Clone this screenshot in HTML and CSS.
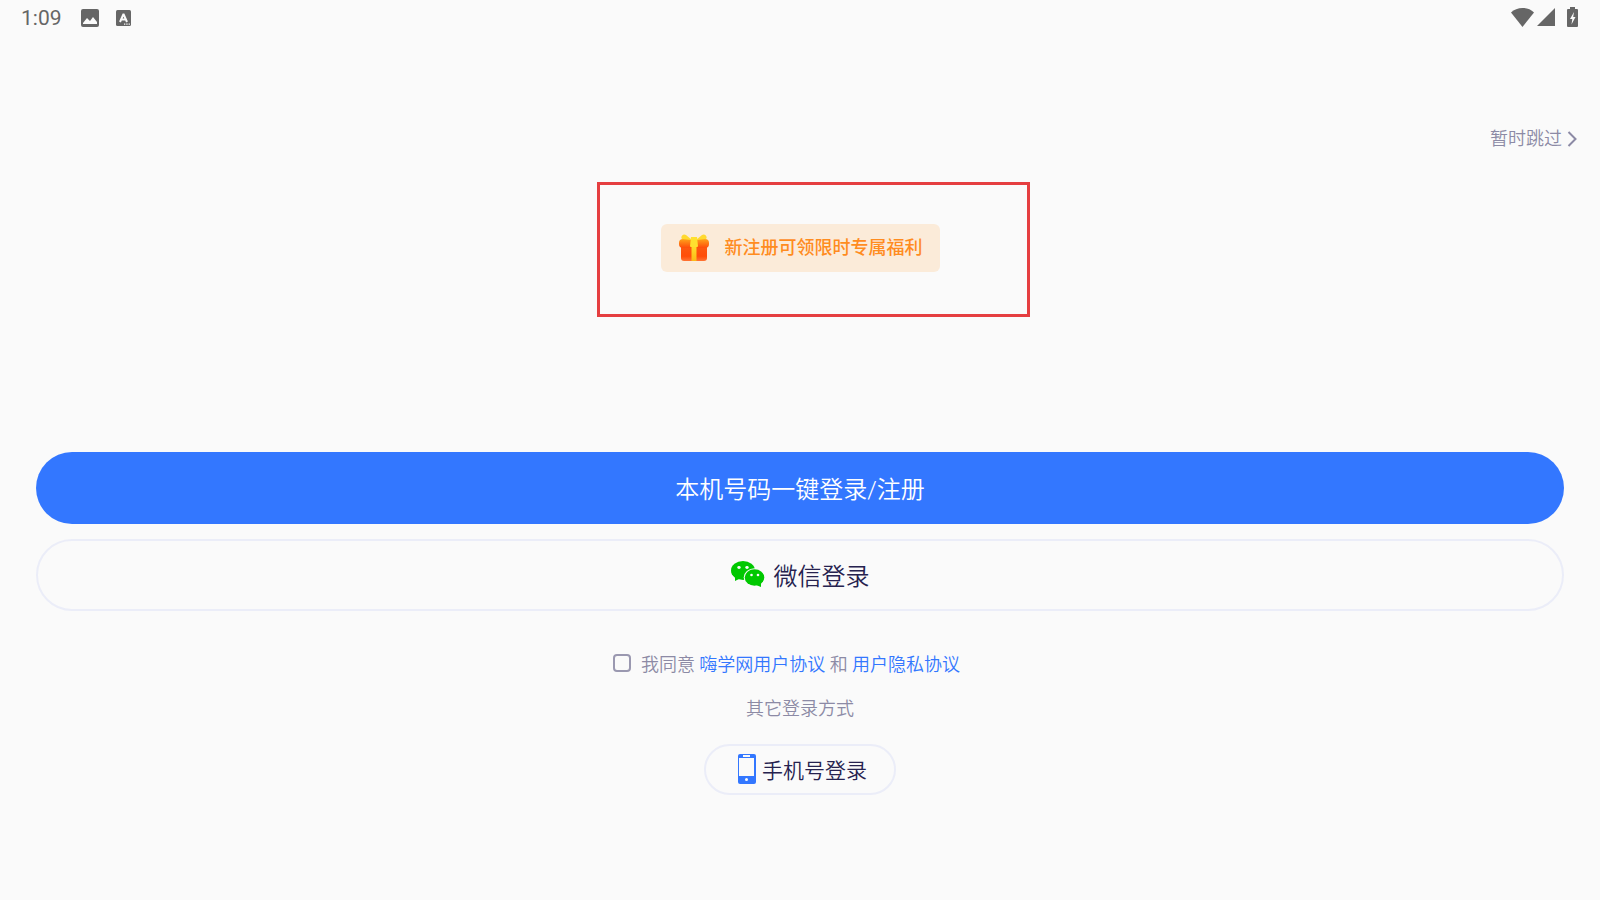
FILE: index.html
```html
<!DOCTYPE html>
<html lang="zh-CN">
<head>
    <meta charset="UTF-8">
    <meta name="viewport" content="width=device-width, initial-scale=1.0">
    <title>登录</title>
    <link rel="stylesheet" href="styles.css">
</head>
<body>
    <header class="status-bar">
        <div class="status-left">
            <span class="clock">1:09</span>
            <svg class="status-image" width="18" height="18" viewBox="0 0 18 18">
                <path fill="#666" fill-rule="evenodd" d="M2 0h14a2 2 0 0 1 2 2v14a2 2 0 0 1-2 2H2a2 2 0 0 1-2-2V2a2 2 0 0 1 2-2zM2 15h14v-2l-4-5-3 4-3-3-4 5z"/>
            </svg>
            <svg class="status-app" width="15" height="16" viewBox="0 0 15 16">
                <rect width="15" height="16" rx="1.5" fill="#666"/>
                <path fill="none" stroke="#fafafa" stroke-width="2" d="M4 12L7.3 4.500h.4L11 12M5 9.500h5"/>
                <path fill="#fafafa" d="M8 13.500h1.300v1.300H8zM10.300 13.500h1.300v1.300h-1.300zM12.600 13.500h1.300v1.300h-1.300z"/>
            </svg>
        </div>
        <div class="status-right">
            <svg width="23" height="19" viewBox="0 0 23 19">
                <path fill="#666" d="M11.500 19L0 4.500C3 1.500 7 0 11.500 0S20 1.500 23 4.500z"/>
            </svg>
            <svg width="18" height="18" viewBox="0 0 18 18">
                <path fill="#666" d="M18 0v18H0z"/>
            </svg>
            <svg class="battery" width="11" height="20" viewBox="0 0 11 20">
                <path fill="#666" d="M3 0h5v2h2a1 1 0 0 1 1 1v16a1 1 0 0 1-1 1H1a1 1 0 0 1-1-1V3a1 1 0 0 1 1-1h2z"/>
                <path fill="#fafafa" d="M7 5L3 12h2.300L4.500 17.500 8.500 10H6.200z"/>
            </svg>
        </div>
    </header>

    <nav class="top-nav">
        <a class="skip" href="#">暂时跳过
            <svg width="10" height="16" viewBox="0 0 10 16">
                <path fill="none" stroke="#8c8aa5" stroke-width="2" d="M1.500 1l7 7-7 7"/>
            </svg>
        </a>
    </nav>

    <main class="login">
        <div class="promo">
            <svg width="32" height="28" viewBox="0 0 32 28">
                <defs>
                    <linearGradient id="box" x1="0" y1="0" x2="0" y2="1">
                        <stop offset="0" stop-color="#fb5b12"/>
                        <stop offset=".7" stop-color="#ff4d08"/>
                        <stop offset="1" stop-color="#ff7433"/>
                    </linearGradient>
                    <linearGradient id="lid" x1="0" y1="0" x2="0" y2="1">
                        <stop offset="0" stop-color="#ffa31a"/>
                        <stop offset="1" stop-color="#ff4b0b"/>
                    </linearGradient>
                    <linearGradient id="ribbon" x1="0" y1="0" x2="0" y2="1">
                        <stop offset="0" stop-color="#ffe22e"/>
                        <stop offset="1" stop-color="#fcb917"/>
                    </linearGradient>
                </defs>
                <path fill="url(#box)" d="M3 11h26v13a3 3 0 0 1-3 3H6a3 3 0 0 1-3-3z"/>
                <rect x="1" y="5" width="30" height="9" rx="4" fill="url(#lid)"/>
                <path fill="#ffd92f" d="M14 6L8 1C5-1 2 3 4 5l9 1zM18 6l6-5c3-2 6 2 4 4l-9 1z"/>
                <path fill="url(#ribbon)" d="M13.500 10h5v17h-5z"/>
                <path fill="#ffe02f" d="M13 3h6l1 9a1 1 0 0 1-1 1h-6a1 1 0 0 1-1-1z"/>
            </svg>
            <span>新注册可领限时专属福利</span>
            <div class="highlight"></div>
        </div>

        <button class="btn btn-primary" type="button">本机号码一键登录/注册</button>
        <button class="btn btn-wechat" type="button">
            <svg width="34" height="26" viewBox="0 0 34 26">
                <ellipse cx="12" cy="9.500" rx="12" ry="9.500" fill="#00c800"/>
                <path fill="#00c800" d="M4 15v5l6-3z"/>
                <ellipse cx="23.500" cy="16.500" rx="10.800" ry="9.300" fill="#fafafa"/>
                <ellipse cx="23.500" cy="16.500" rx="9.800" ry="8.300" fill="#00c800"/>
                <path fill="#00c800" d="M25 24l5 2v-5z"/>
                <g fill="#fafafa">
                    <ellipse cx="8" cy="6.500" rx="1.700" ry="1.400"/>
                    <ellipse cx="16" cy="6.500" rx="1.700" ry="1.400"/>
                    <circle cx="20.500" cy="14" r="1.300"/>
                    <circle cx="27" cy="14" r="1.300"/>
                </g>
            </svg>
            微信登录
        </button>

        <div class="agreement">
            <input type="checkbox" id="agree">
            <p><label for="agree">我同意</label> <a href="#">嗨学网用户协议</a> 和 <a href="#">用户隐私协议</a></p>
        </div>

        <p class="other">其它登录方式</p>
        <button class="btn-phone" type="button">
            <svg width="18" height="30" viewBox="0 0 18 30">
                <rect width="18" height="30" rx="2" fill="#3377ff"/>
                <path fill="#fafafa" d="M1 4h15v18H1zM5 1h7v2H5z"/>
                <circle cx="8.500" cy="25.500" r="1.500" fill="#fafafa"/>
            </svg>
            手机号登录
        </button>
    </main>
</body>
</html>
```
FILE: styles.css
```css
* {
    box-sizing: border-box;
}
body {
    margin: 0;
    background-color: #fafafa;
    color: #8c8aa5;
    font-family: Roboto, "Noto Sans CJK SC", sans-serif;
    font-size: 18px;
    font-weight: 350;
    line-height: 26px;
}
a {
    color: #3377ff;
    text-decoration: none;
}
p {
    margin: 0;
}
svg {
    display: block;
    flex-shrink: 0;
}
button {
    font-family: inherit;
    font-weight: inherit;
    cursor: pointer;
}
.status-bar {
    display: flex;
    justify-content: space-between;
    align-items: center;
    height: 36px;
    padding: 0 22px 0 21px;
}
.status-left, .status-right {
    display: flex;
    align-items: center;
}
.clock {
    color: #666;
    font-size: 21px;
    font-weight: 400;
}
.status-image {
    margin-left: 19px;
}
.status-app {
    margin-left: 17px;
}
.status-right {
    gap: 3px;
    padding-bottom: 2px;
}
.battery {
    margin-left: 9px;
}
.top-nav {
    display: flex;
    justify-content: flex-end;
    padding: 90px 23px 0;
}
.skip {
    display: flex;
    align-items: center;
    gap: 5px;
    color: #8c8aa5;
}
.login {
    display: flex;
    flex-direction: column;
    align-items: center;
    padding: 72px 36px 40px;
}
.promo {
    position: relative;
    display: flex;
    align-items: center;
    gap: 15px;
    height: 48px;
    margin-bottom: 180px;
    padding: 0 17px;
    border-radius: 6px;
    background-color: #fbebd9;
    color: #ff8c1f;
    font-weight: 500;
}
/* red frame around the promo tag */
.highlight {
    position: absolute;
    top: -42px;
    right: -90px;
    bottom: -45px;
    left: -64px;
    border: 3px solid #e53e40;
}
.btn {
    display: flex;
    justify-content: center;
    align-items: center;
    gap: 9px;
    width: 100%;
    height: 72px;
    padding: 0 0 2px;
    border: none;
    border-radius: 36px;
    font-size: 24px;
}
.btn-primary {
    background-color: #3377ff;
    color: #fff;
}
.btn-wechat {
    margin-top: 15px;
    border: 2px solid #ebedf8;
    background-color: transparent;
    color: #26224f;
}
.agreement {
    display: flex;
    align-items: center;
    gap: 10px;
    margin-top: 37px;
    padding-right: 27px;
}
.agreement p {
    padding-top: 4px;
}
.agreement input {
    appearance: none;
    width: 18px;
    height: 18px;
    margin: 0;
    border: 2px solid #9a98b0;
    border-radius: 4px;
}
.agreement input:checked {
    background-color: #3377ff;
}
.other {
    margin-top: 18px;
}
.btn-phone {
    display: flex;
    align-items: center;
    gap: 6px;
    height: 51px;
    margin-top: 22px;
    padding: 0 27px 2px 32px;
    border: 2px solid #ebedf8;
    border-radius: 26px;
    background-color: transparent;
    color: #26224f;
    font-size: 21px;
}
```
